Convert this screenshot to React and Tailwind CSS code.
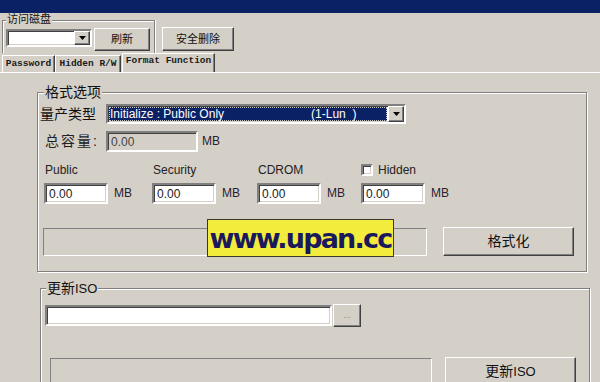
import React from 'react';

// classic win98-ish bevels
const raised = 'border border-t-white border-l-white border-r-[#404040] border-b-[#404040] shadow-[inset_-1px_-1px_0_#808080]';
const sunken = 'border-2 border-t-[#808080] border-l-[#808080] border-r-white border-b-white shadow-[inset_1px_1px_0_#404040,inset_-1px_-1px_0_#d4d0c8]';
const etched = 'border border-[#808080] shadow-[inset_1px_1px_0_#fff,1px_1px_0_#fff]';

const DropArrow = () => (
    <div className={`w-[16px] h-full flex items-center justify-center bg-[#d4d0c8] ${raised}`}>
        <svg width="7" height="4" viewBox="0 0 7 4">
            <path d="M0 0h7L3.5 4z" fill="#000" />
        </svg>
    </div>
);

const Button = ({ width, height, children, className = '' }) => (
    <div
        className={`flex items-center justify-center bg-[#d4d0c8] text-[#111] ${raised} ${className}`}
        style={{ width, height }}
    >
        {children}
    </div>
);

const TextBox = ({ width, value = '', disabled = false }) => (
    <div
        className={`h-[21px] flex items-center pl-[3px] text-[12px] ${sunken} ${disabled ? 'bg-[#d4d0c8] text-[#444]' : 'bg-white text-[#222]'}`}
        style={{ width }}
    >
        {value}
    </div>
);

const SizeField = ({ label, check }) => (
    <div className="flex flex-col">
        <div className="h-[14px] flex items-center text-[12px] text-[#222] leading-[14px]">
            {check && <div className={`w-[12px] h-[12px] bg-white mr-[4px] ${sunken}`} />}
            <span className="ml-[1px]">{label}</span>
        </div>
        <div className="flex items-start mt-[6px]">
            <TextBox width={64} value="0.00" />
            <span className="ml-[6px] mt-[1px] text-[12px] text-[#2a2030]">MB</span>
        </div>
    </div>
);

const Tab = ({ label, width, active }) => (
    <div
        className={`flex items-center justify-center border-t border-l border-t-white border-l-white border-r border-r-[#404040] shadow-[inset_-1px_0_0_#808080] font-['Liberation_Mono',monospace] font-bold text-[9.5px] text-[#1a1a1a] ${active ? 'h-[19px] pb-[3px] bg-[#d4d0c8]' : 'h-[17px] pt-[1px]'}`}
        style={{ width }}
    >
        {label}
    </div>
);

export default function App() {
    return (
        <div className="w-[600px] h-[382px] overflow-hidden bg-[#d4d0c8] font-['Liberation_Sans','Noto_Sans_CJK_SC',sans-serif] text-[#111] flex flex-col">
            {/* title bar */}
            <div className="h-[13px] bg-[#0b2166] shrink-0" />

            {/* disk row */}
            <div className="flex items-start pl-[2px] pt-[7px] shrink-0">
                <div className="relative w-[153px] h-[33px] border-t border-l border-r border-[#808080] shadow-[inset_1px_1px_0_#fff,1px_0_0_#fff]">
                    <span className="absolute left-[3px] top-[-8px] px-[1px] bg-[#d4d0c8] text-[11px] leading-[13px]">访问磁盘</span>
                    <div className="flex items-start pl-[3px] pt-[7px]">
                        <div className={`w-[86px] h-[18px] mt-[1px] flex bg-white ${sunken}`}>
                            <div className="flex-1" />
                            <DropArrow />
                        </div>
                        <Button width={56} height={23} className="ml-[2px] text-[11px]">刷新</Button>
                    </div>
                </div>
                <Button width={72} height={24} className="ml-[7px] mt-[7px] text-[11px]">安全删除</Button>
            </div>

            {/* tabs */}
            <div className="flex items-end pl-[2px] h-[19px] shrink-0">
                <Tab label="Password" width={53} />
                <Tab label="Hidden R/W" width={66} />
                <div className="ml-[1px]">
                    <Tab label="Format Function" width={93} active />
                </div>
            </div>

            {/* tab page */}
            <div className="flex-1 border-t border-t-white">
                {/* 格式选项 */}
                <div className={`relative ml-[37px] mt-[19px] w-[550px] h-[180px] ${etched}`}>
                    <span className="absolute left-[6px] top-[-9px] px-[1px] bg-[#d4d0c8] text-[14px] leading-[16px]">格式选项</span>

                    <div className="flex items-center mt-[11px] pl-[2px]">
                        <span className="w-[66px] text-[14px] leading-[16px]">量产类型</span>
                        <div className={`w-[300px] h-[20px] flex bg-white ${sunken}`}>
                            <div className="flex-1 m-[1px] bg-[#0b2166] outline-1 outline-dotted outline-[#c8c8c8] -outline-offset-1 flex items-center text-white text-[12px] whitespace-pre">
                                <span className="ml-[1px]">Initialize : Public Only</span>
                                <span className="ml-[87px]">(1-Lun  )</span>
                            </div>
                            <DropArrow />
                        </div>
                    </div>

                    <div className="flex items-start mt-[7px] pl-[7px]">
                        <span className="w-[61px] mt-[2px] text-[14px] leading-[16px] tracking-[2px] text-[#222]">总容量:</span>
                        <TextBox width={92} value="0.00" disabled />
                        <span className="ml-[4px] mt-[1px] text-[12px] text-[#2a2030]">MB</span>
                    </div>

                    <div className="flex mt-[11px] pl-[6px]">
                        <div className="w-[108px]"><SizeField label="Public" /></div>
                        <div className="w-[105px]"><SizeField label="Security" /></div>
                        <div className="w-[104px]"><SizeField label="CDROM" /></div>
                        <div><SizeField label="Hidden" check /></div>
                    </div>

                    <div className="flex items-start mt-[23px] pl-[5px]">
                        <div className="w-[384px] h-[28px] mt-[1px] border border-t-[#808080] border-l-[#808080] border-r-white border-b-white" />
                        <Button width={131} height={29} className="ml-[16px] text-[14px]">格式化</Button>
                    </div>

                    {/* watermark */}
                    <div className="absolute left-[169px] top-[126px] w-[187px] h-[38px] bg-[#f4ec3c] border border-[#3a3826] flex items-center justify-center">
                        <span className="font-['DejaVu_Sans',sans-serif] font-bold text-[27px] tracking-[-1.8px] text-[#1a195c] leading-none">www.upan.cc</span>
                    </div>
                </div>

                {/* 更新ISO */}
                <div className={`relative ml-[40px] mt-[16px] w-[550px] h-[110px] ${etched}`}>
                    <span className="absolute left-[5px] top-[-9px] px-[1px] bg-[#d4d0c8] text-[14px] leading-[16px]">更新<span className="text-[13px]">ISO</span></span>

                    <div className="flex items-start mt-[15px] pl-[4px]">
                        <div className={`w-[287px] h-[21px] mt-[1px] bg-white ${sunken}`} />
                        <Button width={28} height={23} className="ml-[1px] text-[9px] text-[#888]">...</Button>
                    </div>

                    <div className="flex items-start mt-[30px] pl-[9px]">
                        <div className="w-[382px] h-[28px] mt-[1px] border border-t-[#808080] border-l-[#808080] border-r-white border-b-white" />
                        <Button width={131} height={29} className="ml-[13px] text-[14px]">
                            更新<span className="text-[13px]">ISO</span>
                        </Button>
                    </div>
                </div>
            </div>
        </div>
    );
}
